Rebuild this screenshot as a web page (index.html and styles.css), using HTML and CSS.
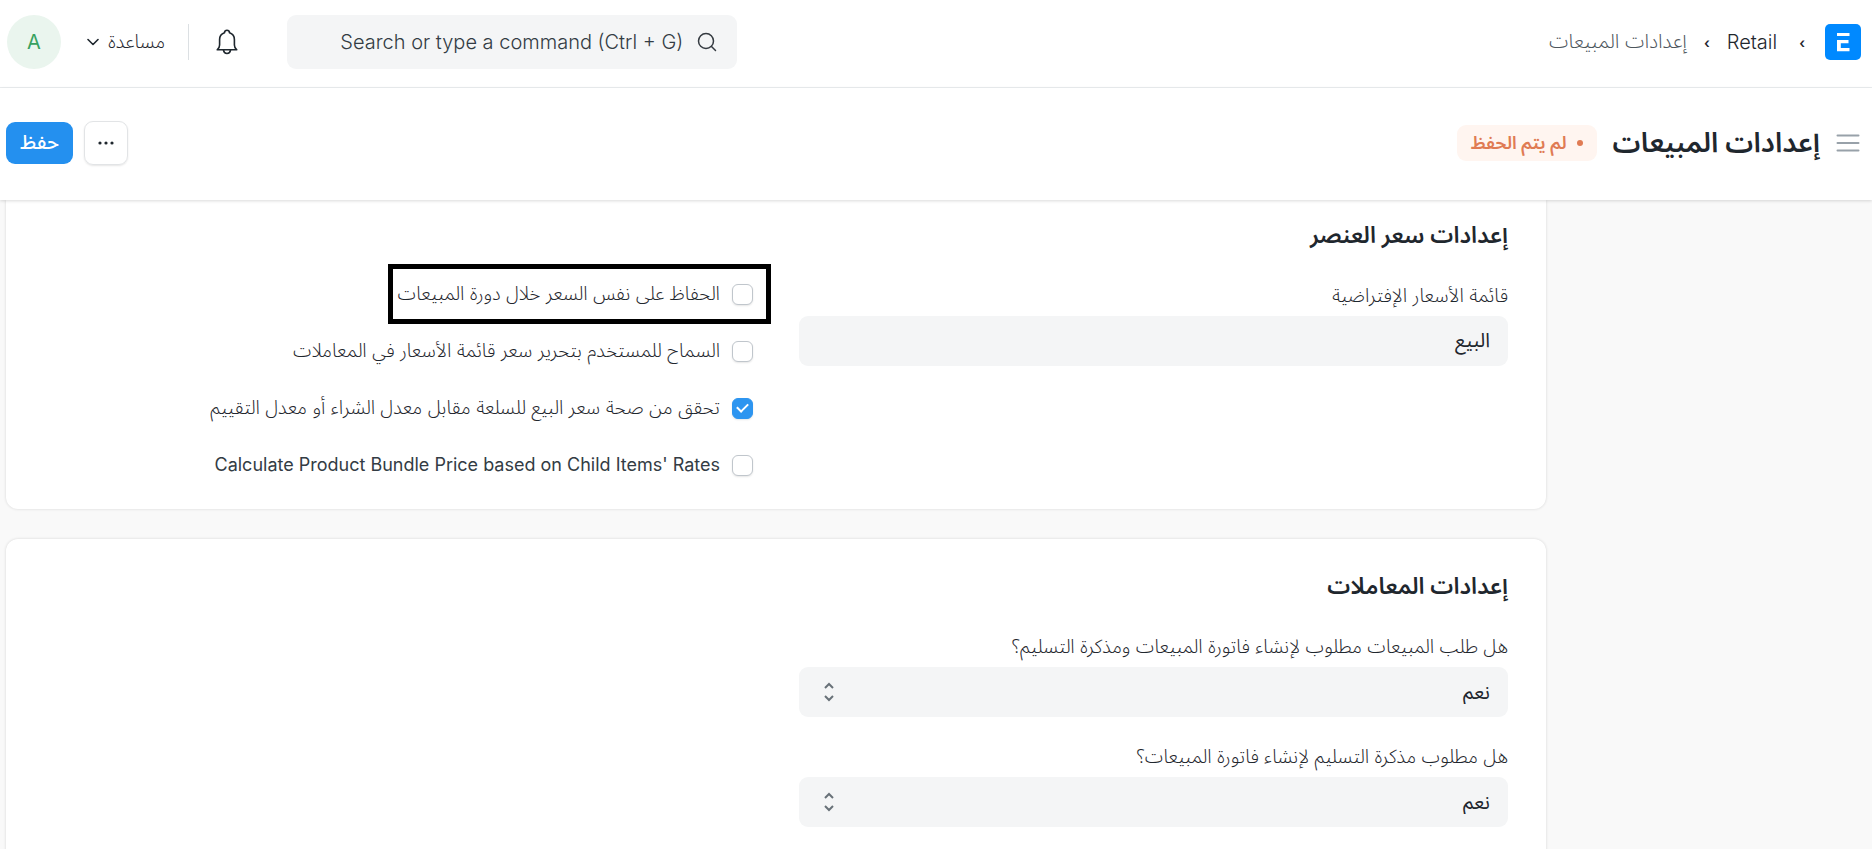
FILE: index.html
```
<!DOCTYPE html>
<html lang="ar" dir="rtl">
<head>
    <meta charset="UTF-8">
    <meta name="viewport" content="width=device-width, initial-scale=1.0">
    <title>إعدادات المبيعات</title>
    <link rel="stylesheet" href="styles.css">
</head>
<body>
    <header class="navbar">
        <nav class="breadcrumb">
            <a href="#" class="logo" aria-label="Home">
                <svg width="36" height="36" viewBox="0 0 36 36">
                    <rect width="36" height="36" rx="5" fill="#0089ff"/>
                    <path d="M12 9h12.500v3H12zM12 16h11.500v3.200H15.800v4.800h8.700v3.200H12z" fill="#fff"/>
                </svg>
            </a>
            <span class="sep">›</span>
            <a href="#" class="crumb">Retail</a>
            <span class="sep">›</span>
            <a href="#" class="crumb current">إعدادات المبيعات</a>
        </nav>
        <div class="nav-tools">
            <div class="search">
                <svg width="20" height="20" viewBox="0 0 20 20" fill="none" stroke="#343a40" stroke-width="1.500" stroke-linecap="round">
                    <circle cx="9" cy="9" r="7.500"/>
                    <path d="M14.500 14.500L18.500 18.500"/>
                </svg>
                <input type="text" dir="ltr" class="search-input" aria-label="Search" placeholder="Search or type a command (Ctrl + G)">
            </div>
            <button class="bell" aria-label="Notifications">
                <svg width="22" height="26" viewBox="0 0 22 26" fill="none" stroke="#1f272e" stroke-width="1.600" stroke-linejoin="round" stroke-linecap="round">
                    <path d="M1.200 20.800H20.800C19 19.500 18.400 18 18.400 16V10.500C18.400 7.300 16.500 4.800 13.600 3.800C13.400 2.200 12.400 1.200 11 1.200S8.600 2.200 8.400 3.800C5.500 4.800 3.600 7.300 3.600 10.500V16C3.600 18 3 19.500 1.200 20.800Z"/>
                    <path d="M7.500 21.200C7.800 23.300 9.200 24.500 11 24.500S14.200 23.300 14.500 21.200"/>
                </svg>
            </button>
            <span class="divider"></span>
            <button class="help">
                مساعدة
                <svg width="12" height="8" viewBox="0 0 12 8" fill="none" stroke="#1f272e" stroke-width="1.600" stroke-linecap="round" stroke-linejoin="round">
                    <path d="M1 1.500L6 6.500L11 1.500"/>
                </svg>
            </button>
            <button class="avatar">A</button>
        </div>
    </header>

    <div class="page-head">
        <div class="page-title">
            <button class="menu" aria-label="Menu">
                <svg width="24" height="18" viewBox="0 0 24 18" stroke="#98a1a9" stroke-width="2" stroke-linecap="round">
                    <path d="M1.500 1.500H22.500M1.500 9H22.500M1.500 16.500H22.500"/>
                </svg>
            </button>
            <h1>إعدادات المبيعات</h1>
            <span class="badge"><span class="dot"></span>لم يتم الحفظ</span>
        </div>
        <div class="page-actions">
            <button class="btn btn-more" aria-label="More">
                <svg width="16" height="4" viewBox="0 0 16 4" fill="#1f272e">
                    <circle cx="2" cy="2" r="1.600"/>
                    <circle cx="8" cy="2" r="1.600"/>
                    <circle cx="14" cy="2" r="1.600"/>
                </svg>
            </button>
            <button class="btn btn-save">حفظ</button>
        </div>
    </div>

    <main class="layout">
        <section class="card card-top">
            <h2>إعدادات سعر العنصر</h2>
            <div class="columns">
                <div class="column">
                    <div class="field">
                        <label for="price-list">قائمة الأسعار الإفتراضية</label>
                        <input type="text" id="price-list" class="control" value="البيع">
                    </div>
                </div>
                <div class="column checks">
                    <label class="check highlight"><input type="checkbox">الحفاظ على نفس السعر خلال دورة المبيعات</label>
                    <label class="check"><input type="checkbox">السماح للمستخدم بتحرير سعر قائمة الأسعار في المعاملات</label>
                    <label class="check"><input type="checkbox" checked>تحقق من صحة سعر البيع للسلعة مقابل معدل الشراء أو معدل التقييم</label>
                    <label class="check"><input type="checkbox"><span dir="ltr" class="latin">Calculate Product Bundle Price based on Child Items' Rates</span></label>
                </div>
            </div>
        </section>

        <section class="card">
            <h2>إعدادات المعاملات</h2>
            <div class="columns">
                <div class="column">
                    <div class="field">
                        <label for="so-required">هل طلب المبيعات مطلوب لإنشاء فاتورة المبيعات ومذكرة التسليم؟</label>
                        <div class="select-wrap">
                            <select id="so-required" class="control">
                                <option>نعم</option>
                                <option>لا</option>
                            </select>
                            <svg class="select-icon" width="10" height="20" viewBox="0 0 10 20" fill="none" stroke="#687178" stroke-width="2">
                                <path d="M1 6L5 2L9 6M1 14L5 18L9 14"/>
                            </svg>
                        </div>
                    </div>
                    <div class="field">
                        <label for="dn-required">هل مطلوب مذكرة التسليم لإنشاء فاتورة المبيعات؟</label>
                        <div class="select-wrap">
                            <select id="dn-required" class="control">
                                <option>نعم</option>
                                <option>لا</option>
                            </select>
                            <svg class="select-icon" width="10" height="20" viewBox="0 0 10 20" fill="none" stroke="#687178" stroke-width="2">
                                <path d="M1 6L5 2L9 6M1 14L5 18L9 14"/>
                            </svg>
                        </div>
                    </div>
                </div>
                <div class="column"></div>
            </div>
        </section>
    </main>
</body>
</html>
```

FILE: styles.css
```
*, *::before, *::after {
    box-sizing: border-box;
}

body {
    margin: 0;
    min-height: 100vh;
    background-color: #f9f9f9;
    color: #1f272e;
    font-family: Inter, "Noto Sans Arabic", "DejaVu Sans Condensed", "DejaVu Sans", sans-serif;
    font-size: 18px;
}

button, input, select {
    font-family: inherit;
    color: inherit;
}

button {
    border: none;
    background: none;
    padding: 0;
    cursor: pointer;
}

svg {
    display: block;
    flex: none;
}

a {
    color: inherit;
    text-decoration: none;
}

.navbar {
    display: flex;
    justify-content: space-between;
    align-items: center;
    height: 88px;
    padding: 0 11px 3px 7px;
    background-color: #ffffff;
    border-bottom: 1px solid #ebeef0;
}

.breadcrumb {
    display: flex;
    align-items: center;
    font-size: 20px;
    font-weight: 300;
}

.crumb.current {
    color: #4c555c;
}

.sep {
    margin: 0 20px 0 22px;
    font-size: 14px;
    font-weight: 600;
}

.crumb + .sep {
    margin: 0 17px;
}

.nav-tools {
    display: flex;
    align-items: center;
}

.search {
    display: flex;
    align-items: center;
    gap: 14px;
    width: 450px;
    height: 54px;
    padding: 0 20px;
    background-color: #f4f5f6;
    border-radius: 9px;
}

.search-input {
    flex: 1;
    min-width: 0;
    border: none;
    outline: none;
    padding: 0;
    background: none;
    font-size: 20px;
    font-weight: 300;
    text-align: right;
}

.search-input::placeholder {
    color: #333c44;
    opacity: 1;
}

.bell {
    margin: 0 49px 0 27px;
}

.divider {
    width: 1px;
    height: 36px;
    background-color: #dce0e3;
}

.help {
    display: flex;
    align-items: center;
    gap: 9px;
    margin: 0 23px 0 26px;
    font-size: 19px;
    font-weight: 300;
}

.avatar {
    width: 54px;
    height: 54px;
    border-radius: 50%;
    background-color: #eaf5ee;
    color: #38a160;
    font-size: 20px;
}

.page-head {
    position: relative;
    z-index: 1;
    display: flex;
    justify-content: space-between;
    align-items: center;
    height: 112px;
    padding: 0 12px 2px 6px;
    background-color: #ffffff;
    box-shadow: 0 1px 3px rgba(0, 0, 0, 0.15);
}

.page-title {
    display: flex;
    align-items: center;
}

.page-title h1 {
    margin: 0 16px 0 16px;
    font-size: 28px;
    font-weight: 600;
}

.badge {
    display: flex;
    align-items: center;
    gap: 10px;
    height: 36px;
    padding: 0 14px;
    background-color: #fff5f0;
    border-radius: 9px;
    color: #e07b53;
    font-size: 18px;
    font-weight: 600;
}

.dot {
    width: 6px;
    height: 6px;
    border-radius: 50%;
    background-color: #e07b53;
}

.page-actions {
    display: flex;
    align-items: center;
    gap: 11px;
}

.btn {
    display: flex;
    align-items: center;
    justify-content: center;
    height: 42px;
    border-radius: 9px;
}

.btn-more {
    width: 44px;
    height: 44px;
    border: 1px solid #e2e4e6;
    box-shadow: 0 1px 2px rgba(0, 0, 0, 0.1);
}

.btn-save {
    width: 67px;
    background-color: #2490ef;
    color: #ffffff;
    font-size: 20px;
    font-weight: 500;
}

.layout {
    display: flex;
    flex-direction: column;
    gap: 30px;
    height: calc(100vh - 200px);
    overflow: hidden;
    padding: 0 326px 0 6px;
}

.card {
    flex: none;
    padding: 31px 38px 40px;
    background-color: #ffffff;
    border-radius: 12px;
    box-shadow: 0 0 3px rgba(0, 0, 0, 0.15);
}

.card-top {
    padding: 19px 38px 31px;
    border-radius: 0 0 12px 12px;
}

.card h2 {
    margin: 0 0 30px;
    font-size: 23px;
    line-height: 32px;
    font-weight: 600;
}

.columns {
    display: grid;
    grid-template-columns: 1fr 1fr;
    gap: 46px;
}

.field {
    margin-bottom: 25px;
}

.field label {
    display: block;
    margin-bottom: 6px;
    font-size: 19px;
    font-weight: 300;
    line-height: 29px;
    color: #1f272e;
}

.control {
    display: block;
    width: 100%;
    height: 50px;
    padding: 0 18px;
    border: none;
    border-radius: 9px;
    background-color: #f4f5f6;
    font-size: 20px;
    appearance: none;
}

.select-wrap {
    position: relative;
}

.select-icon {
    position: absolute;
    left: 25px;
    top: 15px;
    pointer-events: none;
}

.checks {
    display: flex;
    flex-direction: column;
    align-items: flex-start;
    gap: 31px;
}

.check {
    position: relative;
    display: flex;
    align-items: center;
    gap: 12px;
    font-size: 19px;
    font-weight: 300;
    line-height: 26px;
    color: #1f272e;
}

.latin {
    font-size: 18px;
    font-weight: 400;
    color: #333c44;
}

.check input {
    appearance: none;
    flex: none;
    width: 21px;
    height: 21px;
    margin: 0;
    border: 1px solid #c0c6cc;
    border-radius: 6px;
    background-color: #ffffff;
    box-shadow: 0 1px 2px rgba(0, 0, 0, 0.1);
}

.check input:checked {
    position: relative;
    border-color: #2d95f0;
    background-color: #2d95f0;
}

.check input:checked::after {
    content: "";
    position: absolute;
    left: 4px;
    top: 4px;
    width: 11px;
    height: 7px;
    border-left: 2px solid #ffffff;
    border-bottom: 2px solid #ffffff;
    transform: rotate(-45deg);
}

/* marks the option being explained */
.highlight::after {
    content: "";
    position: absolute;
    top: -17px;
    right: -18px;
    width: 383px;
    height: 60px;
    border: 5px solid #000000;
}
```
